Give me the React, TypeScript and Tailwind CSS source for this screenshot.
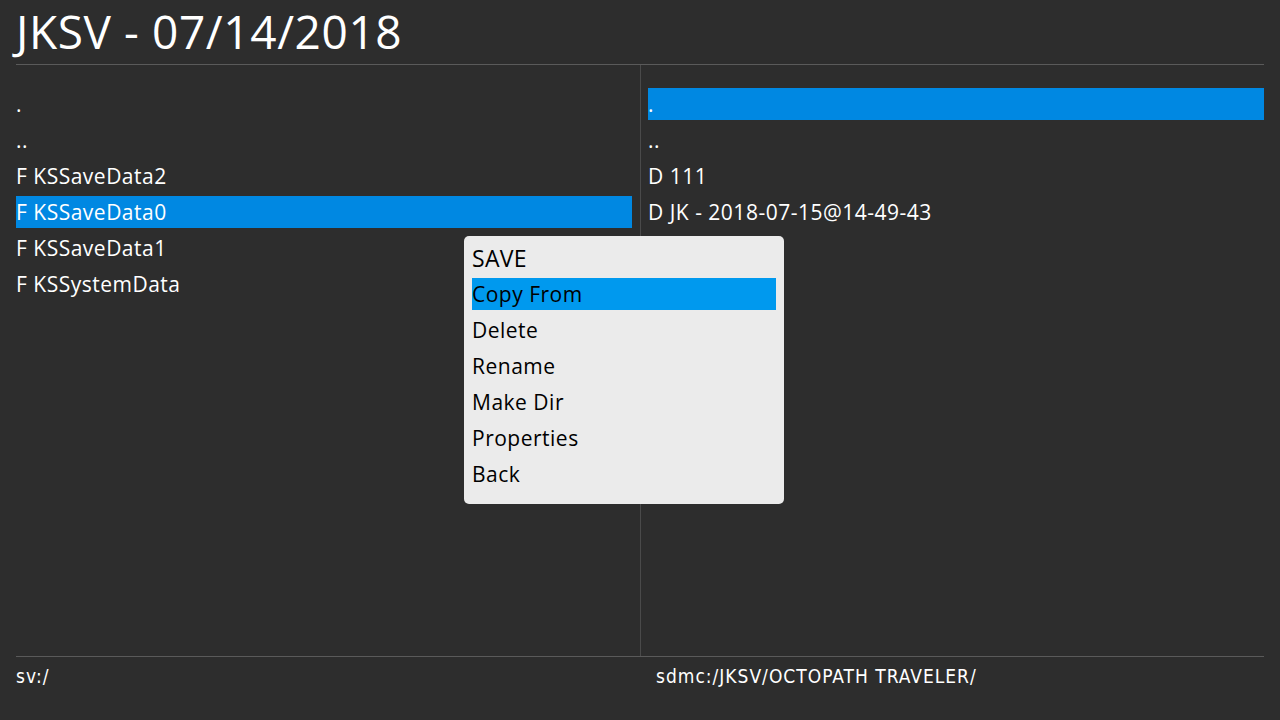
const leftItems = [".", "..", "F KSSaveData2", "F KSSaveData0", "F KSSaveData1", "F KSSystemData"];
const rightItems = [".", "..", "D 111", "D JK - 2018-07-15@14-49-43"];
const menuItems = ["Copy From", "Delete", "Rename", "Make Dir", "Properties", "Back"];

function Row({ label, selected }: { label: string; selected: boolean }) {
  return (
    <div
      className={
        "h-8 mb-1 flex items-center text-[21px] leading-none tracking-[0.5px] text-white " +
        (selected ? "bg-[#0088e2]" : "")
      }
    >
      {label}
    </div>
  );
}

export default function App() {
  return (
    <div
      className="relative w-[1280px] h-[720px] bg-[#2d2d2d] overflow-hidden"
      style={{ fontFamily: '"Open Sans", "Noto Sans", sans-serif' }}
    >
      {/* Header */}
      <div className="h-16 px-4 flex items-end">
        <h1 className="text-[46px] leading-none text-white pb-[10px] tracking-[0.6px]">JKSV - 07/14/2018</h1>
      </div>
      <div className="mx-4 h-px bg-[#5a5a5a]" />

      {/* Panels */}
      <div className="flex h-[591px]">
        <div className="w-[641px] pl-4 pr-2 pt-[23px] border-r border-[#4a4a4a]">
          {leftItems.map((it, i) => (
            <Row key={i} label={it} selected={i === 3} />
          ))}
        </div>
        <div className="flex-1 pl-[7px] pr-4 pt-[23px]">
          {rightItems.map((it, i) => (
            <Row key={i} label={it} selected={i === 0} />
          ))}
        </div>
      </div>
      <div className="mx-4 h-px bg-[#5a5a5a]" />

      {/* Footer */}
      <div
        className="flex px-4 pt-[10px] text-[19px] leading-none tracking-[1px] text-white"
        style={{ fontFamily: '"DejaVu Sans Condensed", "DejaVu Sans", sans-serif' }}
      >
        <div className="w-[640px]">sv:/</div>
        <div>sdmc:/JKSV/OCTOPATH TRAVELER/</div>
      </div>

      {/* Context menu */}
      <div className="absolute left-[464px] top-[236px] w-[320px] h-[268px] rounded-[5px] bg-[#ebebeb] px-2 pt-[6px]">
        <div className="h-8 mb-1 flex items-center text-[23px] leading-none tracking-[0.3px] text-black">SAVE</div>
        {menuItems.map((it, i) => (
          <div
            key={it}
            className={
              "h-8 mb-1 flex items-center text-[21px] leading-none tracking-[0.5px] text-black " +
              (i === 0 ? "bg-[#0099ee]" : "")
            }
          >
            {it}
          </div>
        ))}
      </div>
    </div>
  );
}
